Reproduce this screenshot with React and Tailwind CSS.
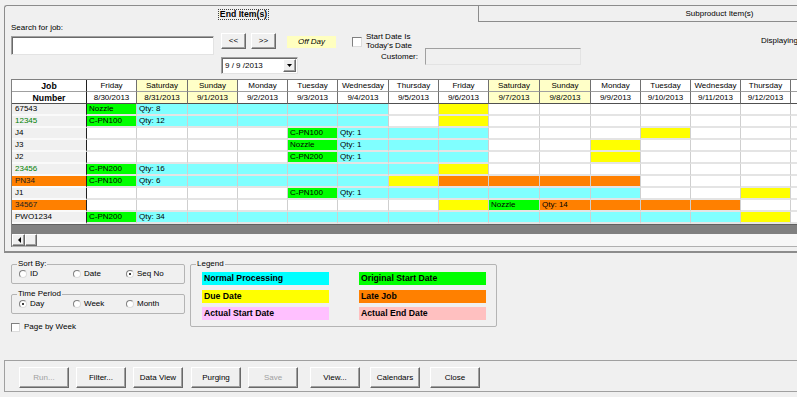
import React from "react";

const raised =
  "bg-[#f0f0f0] border border-t-white border-l-white border-r-[#696969] border-b-[#696969] shadow-[inset_-1px_-1px_0_#a0a0a0]";
const sunken =
  "border border-t-[#a0a0a0] border-l-[#a0a0a0] border-r-[#e3e3e3] border-b-[#e3e3e3] shadow-[inset_1px_1px_0_#696969]";

const cols = [
  ["Friday", "8/30/2013", "w-[50px]", false],
  ["Saturday", "8/31/2013", "w-[51px]", true],
  ["Sunday", "9/1/2013", "w-[50px]", true],
  ["Monday", "9/2/2013", "w-[50px]", false],
  ["Tuesday", "9/3/2013", "w-[50px]", false],
  ["Wednesday", "9/4/2013", "w-[51px]", false],
  ["Thursday", "9/5/2013", "w-[50px]", false],
  ["Friday", "9/6/2013", "w-[50px]", false],
  ["Saturday", "9/7/2013", "w-[51px]", true],
  ["Sunday", "9/8/2013", "w-[51px]", true],
  ["Monday", "9/9/2013", "w-[50px]", false],
  ["Tuesday", "9/10/2013", "w-[50px]", false],
  ["Wednesday", "9/11/2013", "w-[50px]", false],
  ["Thursday", "9/12/2013", "w-[50px]", false],
  ["", "", "w-[50px]", false],
];

const colorMap = {
  W: "bg-white",
  C: "bg-[#80ffff]",
  Y: "bg-[#ffff00]",
  G: "bg-[#00ff00]",
  O: "bg-[#ff8000]",
};

const rows = [
  { job: "67543", kind: "", cells: "GCCCCCWYWWWWWWW", texts: { 0: "Nozzle", 1: "Qty: 8" } },
  { job: "12345", kind: "green", cells: "GCCCCCWYWWWWWWW", texts: { 0: "C-PN100", 1: "Qty: 12" } },
  { job: "J4", kind: "", cells: "WWWWGCCCWWWYWWW", texts: { 4: "C-PN100", 5: "Qty: 1" } },
  { job: "J3", kind: "", cells: "WWWWGCCCWWYWWWW", texts: { 4: "Nozzle", 5: "Qty: 1" } },
  { job: "J2", kind: "", cells: "WWWWGCCCWWYWWWW", texts: { 4: "C-PN200", 5: "Qty: 1" } },
  { job: "23456", kind: "green", cells: "GCCCCCCYWWWWWWW", texts: { 0: "C-PN200", 1: "Qty: 16" } },
  { job: "PN34", kind: "orange", cells: "GCCCCCYOOOOWWWW", texts: { 0: "C-PN100", 1: "Qty: 6" } },
  { job: "J1", kind: "", cells: "WWWWGCCCCCCWWYW", texts: { 4: "C-PN100", 5: "Qty: 1" } },
  { job: "34567", kind: "orange", cells: "WWWWWWWYGOOOOWW", texts: { 8: "Nozzle", 9: "Qty: 14" } },
  { job: "PWO1234", kind: "", cells: "GCCCCCCCCCCCCYW", texts: { 0: "C-PN200", 1: "Qty: 34" } },
];

function Btn({ className = "", children, disabled }) {
  return (
    <div
      className={`flex items-center justify-center ${raised} ${
        disabled ? "text-[#a0a0a0]" : "text-black"
      } ${className}`}
    >
      {children}
    </div>
  );
}

function Radio({ checked, label, className = "" }) {
  return (
    <div className={`flex items-center ${className}`}>
      <div className="w-[8px] h-[8px] rounded-full bg-white border border-t-[#808080] border-l-[#808080] border-r-[#dcdcdc] border-b-[#dcdcdc] flex items-center justify-center">
        {checked && <div className="w-[2px] h-[2px] rounded-full bg-black" />}
      </div>
      <span className="ml-[3px] leading-[10px]">{label}</span>
    </div>
  );
}

function Check({ className = "" }) {
  return (
    <div
      className={`w-[9px] h-[9px] bg-white border border-t-[#808080] border-l-[#808080] border-r-[#dcdcdc] border-b-[#dcdcdc] ${className}`}
    />
  );
}

function Group({ title, className = "", children }) {
  return (
    <div className={`relative border border-[#b4b4b4] rounded-[2px] ${className}`}>
      <span className="absolute -top-[6px] left-[5px] px-[1px] bg-[#f0f0f0] leading-[10px]">
        {title}
      </span>
      {children}
    </div>
  );
}

function LegendItem({ color, label }) {
  return (
    <div className={`w-[127px] h-[13px] ${color} pl-[2px] flex items-center font-bold text-[8.7px] leading-[11px]`}>
      {label}
    </div>
  );
}

function Grid() {
  return (
    <div className="ml-[6px] w-[949px] border-l border-t border-[#808080] bg-white">
      <div className="flex">
        <div className="w-[75px] h-[12px] border-r border-r-[#202020] border-b border-b-[#a0a0a0] bg-white flex items-center justify-center font-bold text-[8.7px] leading-[10px]">
          Job
        </div>
        {cols.map((c, i) => (
          <div
            key={i}
            className={`${c[2]} h-[12px] border-r border-r-[#707070] border-b border-b-[#a0a0a0] ${
              c[3] ? "bg-[#ffffc8]" : "bg-white"
            } flex items-center justify-center leading-[10px] shrink-0`}
          >
            {c[0]}
          </div>
        ))}
      </div>
      <div className="flex">
        <div className="w-[75px] h-[12px] border-r border-r-[#202020] border-b border-b-[#505050] bg-white flex items-center justify-center font-bold text-[8.7px] leading-[10px]">
          Number
        </div>
        {cols.map((c, i) => (
          <div
            key={i}
            className={`${c[2]} h-[12px] border-r border-r-[#707070] border-b border-b-[#505050] ${
              c[3] ? "bg-[#ffffc8]" : "bg-white"
            } flex items-center justify-center leading-[10px] shrink-0`}
          >
            {c[1]}
          </div>
        ))}
      </div>
      {rows.map((r, ri) => (
        <div key={ri} className="flex">
          <div
            className={`w-[75px] h-[12px] border-r border-r-[#202020] border-b-2 border-b-[#fafafa] pl-[3px] flex items-center leading-[10px] shrink-0 ${
              r.kind === "orange" ? "bg-[#ff8000] text-[#202020]" : "bg-[#f0f0f0]"
            } ${r.kind === "green" ? "text-[#008000]" : ""}`}
          >
            {r.job}
          </div>
          {cols.map((c, i) => (
            <div
              key={i}
              className={`${c[2]} h-[12px] border-r border-r-[#cfcfcf] border-b-2 border-b-[#e4e4e4] ${
                colorMap[r.cells[i]]
              } pl-[2px] flex items-center leading-[10px] shrink-0 whitespace-nowrap`}
            >
              {r.texts[i] || ""}
            </div>
          ))}
        </div>
      ))}
      <div className="h-[10px] bg-[#808080] border-t border-[#606060]" />
      <div className="h-[13px] flex bg-[#f7f7f7] border-b border-[#b0b0b0]">
        <div className={`w-[13px] h-[12px] ${raised} flex items-center justify-center`}>
          <svg width="4" height="6" viewBox="0 0 4 6">
            <polygon points="4,0 4,6 1,3" fill="#000" />
          </svg>
        </div>
        <div className={`w-[12px] h-[12px] ${raised}`} />
      </div>
    </div>
  );
}

export default function App() {
  return (
    <div className="w-[797px] h-[397px] overflow-hidden bg-[#f0f0f0] text-black font-['Liberation_Sans',Arial,sans-serif] text-[8px] leading-[10px]">
      <div className="ml-[4px] mt-[5px] w-[956px] border-l border-t border-b-2 border-[#8c8c8c] rounded-tl-[3px] pb-[4px]">
        <div className="flex h-[16px]">
          <div className="w-[473px] flex justify-center pl-[4px]">
            <div className="mt-[3px] h-[11px] px-[1px] border border-dotted border-[#404040] font-bold text-[8.7px] leading-[9px] flex items-center">
              End Item(s)
            </div>
          </div>
          <div className="w-[482px] border-l border-b border-[#8c8c8c] flex items-center justify-center leading-[10px]">
            Subproduct Item(s)
          </div>
        </div>

        <div className="h-[57px] flex items-start pl-[6px]">
          <div className="w-[203px] flex flex-col shrink-0">
            <div className="mt-[1px] h-[10px]">Search for job:</div>
            <div className={`mt-[3px] h-[19px] bg-white ${sunken}`} />
          </div>

          <div className="ml-[7px] flex flex-col shrink-0">
            <div className="mt-[11px] flex items-start">
              <Btn className="w-[25px] h-[16px]">&lt;&lt;</Btn>
              <Btn className="ml-[5px] w-[25px] h-[16px]">&gt;&gt;</Btn>
              <div className="ml-[11px] mt-[3px] w-[49px] h-[12px] bg-[#ffffc0] italic flex items-center justify-center">
                Off Day
              </div>
            </div>
            <div className={`mt-[8px] w-[77px] h-[17px] bg-white ${sunken} flex items-center`}>
              <span className="pl-[3px]">9 / 9 /2013</span>
              <div className={`ml-auto w-[13px] h-[13px] mr-[1px] ${raised} flex items-center justify-center`}>
                <svg width="5" height="3" viewBox="0 0 5 3">
                  <polygon points="0,0 5,0 2.5,3" fill="#000" />
                </svg>
              </div>
            </div>
          </div>

          <div className="ml-[16px] mt-[10px] flex flex-col shrink-0">
            <div className="flex items-start">
              <div className="mt-[5px] w-[10px] h-[10px] bg-white border border-t-[#808080] border-l-[#808080] border-r-[#dcdcdc] border-b-[#dcdcdc]" />
              <div className="ml-[4px] leading-[9px]">
                Start Date Is
                <br />
                Today's Date
              </div>
            </div>
            <div className="flex items-center -mt-[2px]">
              <div className="w-[66px] text-right">Customer:</div>
              <div className="ml-[7px] w-[156px] h-[17px] bg-[#f0f0f0] border border-t-[#a0a0a0] border-l-[#a0a0a0] border-r-[#e3e3e3] border-b-[#e3e3e3]" />
            </div>
          </div>

          <div className="ml-[180px] mt-[14px] whitespace-nowrap shrink-0">Displaying</div>
        </div>

        <Grid />
      </div>

      <div className="h-[107px] flex items-start">
        <div className="ml-[11px] w-[174px] flex flex-col">
          <Group title="Sort By:" className="mt-[11px] h-[20px] flex items-center pl-[7px]">
            <Radio label="ID" className="w-[54px]" />
            <Radio label="Date" className="w-[53px]" />
            <Radio label="Seq No" checked />
          </Group>
          <Group title="Time Period" className="mt-[10px] h-[20px] flex items-center pl-[7px]">
            <Radio label="Day" checked className="w-[54px]" />
            <Radio label="Week" className="w-[53px]" />
            <Radio label="Month" />
          </Group>
          <div className="mt-[8px] flex items-center">
            <Check />
            <span className="ml-[4px]">Page by Week</span>
          </div>
        </div>

        <Group title="Legend" className="ml-[5px] mt-[11px] w-[307px] h-[63px] pl-[11px] pt-[7px]">
          <div className="flex gap-[30px]">
            <LegendItem color="bg-[#00ffff]" label="Normal Processing" />
            <LegendItem color="bg-[#00ff00]" label="Original Start Date" />
          </div>
          <div className="flex gap-[30px] mt-[5px]">
            <LegendItem color="bg-[#ffff00]" label="Due Date" />
            <LegendItem color="bg-[#ff8000]" label="Late Job" />
          </div>
          <div className="flex gap-[30px] mt-[4px]">
            <LegendItem color="bg-[#ffc0ff]" label="Actual Start Date" />
            <LegendItem color="bg-[#ffc0c0]" label="Actual End Date" />
          </div>
        </Group>
      </div>

      <div className="ml-[4px] w-[900px] h-[32px] border border-[#a0a0a0] flex items-start pt-[6px] pl-[14px]">
        <Btn disabled className="w-[50px] h-[21px]">Run...</Btn>
        <Btn className="ml-[7px] w-[50px] h-[21px]">Filter...</Btn>
        <Btn className="ml-[7px] w-[50px] h-[21px]">Data View</Btn>
        <Btn className="ml-[8px] w-[50px] h-[21px]">Purging</Btn>
        <Btn disabled className="ml-[7px] w-[50px] h-[21px]">Save</Btn>
        <Btn className="ml-[12px] w-[50px] h-[21px]">View...</Btn>
        <Btn className="ml-[10px] w-[50px] h-[21px]">Calendars</Btn>
        <Btn className="ml-[10px] w-[50px] h-[21px]">Close</Btn>
      </div>
    </div>
  );
}
